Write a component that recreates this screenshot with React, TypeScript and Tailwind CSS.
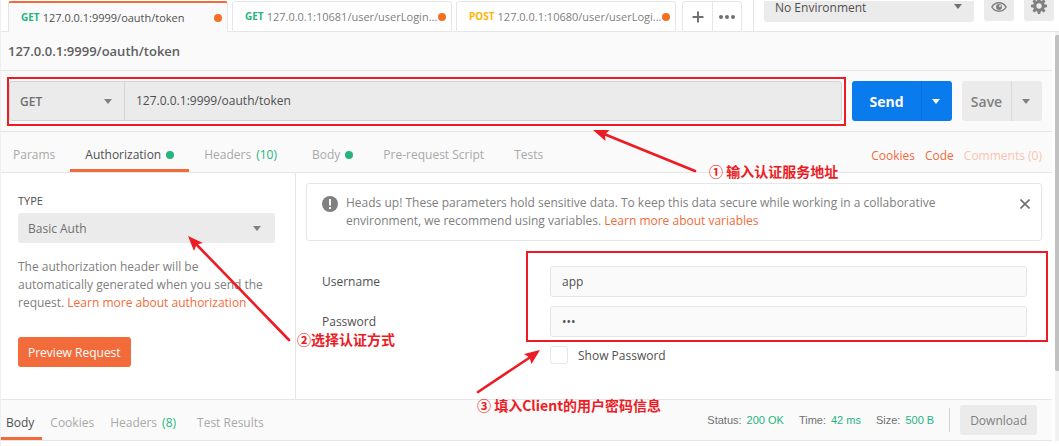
import type { ReactNode } from "react";
import { LuPlus } from "react-icons/lu";

function Caret({ className = "" }: { className?: string }) {
  return (
    <svg viewBox="0 0 8 5" className={`h-[5px] w-2 shrink-0 fill-current ${className}`} aria-hidden="true">
      <path d="M0 0h8L4 5z" />
    </svg>
  );
}

function EyeIcon() {
  return (
    <svg viewBox="0 0 16 10" className="h-[10px] w-4" aria-hidden="true">
      <path d="M8 .8C4.8.8 2.2 2.600.9 5c1.300 2.400 3.900 4.200 7.100 4.200s5.800-1.800 7.100-4.200C13.800 2.600 11.200.8 8 .8z" fill="none" stroke="#808080" strokeWidth="1.500" />
      <circle cx="8" cy="5" r="3" fill="#808080" />
      <circle cx="9" cy="4" r="1" fill="#ebebeb" />
    </svg>
  );
}

function GearIcon() {
  const angles = [0, 45, 90, 135, 180, 225, 270, 315];
  return (
    <svg viewBox="0 0 16 16" className="size-4 shrink-0 fill-[#808080]" aria-hidden="true">
      {angles.map((a) => (
        <path key={a} d="M6.200 3 6.800 0h2.400l.6 3z" transform={`rotate(${a} 8 8)`} />
      ))}
      <circle cx="8" cy="8" r="4.200" fill="none" stroke="#808080" strokeWidth="3" />
    </svg>
  );
}

interface RequestTabProps {
  method: string;
  url: string;
  active?: boolean;
}

function RequestTab({ method, url, active = false }: RequestTabProps) {
  return (
    <button
      type="button"
      role="tab"
      aria-selected={active}
      className={`relative flex h-full w-[220px] items-center gap-[3px] rounded-t-[3px] border-x pr-[5px] pl-3 text-[11px] ${
        active
          ? "border-x-[#e6e6e6] border-t-2 border-t-[#f26b3a] bg-[#fafafa] text-[#505050]"
          : "border-t border-[#e6e6e6] border-b border-b-[#e6e6e6] bg-white text-[#808080]"
      }`}
    >
      <span className={`text-[10px] font-bold ${method === "POST" ? "text-[#ffb400]" : "text-[#26b47f]"}`}>{method}</span>
      <span className="whitespace-nowrap pt-px">{url}</span>
      <span className="absolute right-[5px] size-2 rounded-full bg-[#f47023]" />
    </button>
  );
}

function SectionTab({ children, active = false }: { children: ReactNode; active?: boolean }) {
  return (
    <button
      type="button"
      role="tab"
      aria-selected={active}
      className={`flex h-full items-center gap-[5px] border-b-[3px] pt-2 ${
        active ? "border-[#f26b3a] text-[#505050]" : "border-transparent text-[#a9a9a9]"
      }`}
    >
      {children}
    </button>
  );
}

function Dot() {
  return <span className="size-2 rounded-full bg-[#26b47f]" />;
}

function TopBar() {
  return (
    <header className="flex h-8 justify-between bg-white">
      <div className="flex flex-1 items-stretch pt-px">
        <div className="w-[7px] border-b border-[#e6e6e6]" />
        <div role="tablist" className="flex">
          <RequestTab method="GET" url="127.0.0.1:9999/oauth/token" active />
          <div className="w-1 border-b border-[#e6e6e6]" />
          <RequestTab method="GET" url="127.0.0.1:10681/user/userLogin..." />
          <div className="w-1 border-b border-[#e6e6e6]" />
          <RequestTab method="POST" url="127.0.0.1:10680/user/userLogi..." />
        </div>
        <div className="w-[6px] border-b border-[#e6e6e6]" />
        <div className="flex rounded-t-[3px] border border-[#e6e6e6]">
          <button type="button" aria-label="New tab" className="flex w-[30px] items-center justify-center border-r border-[#e6e6e6] text-[#707070]">
            <LuPlus className="size-4" strokeWidth={3} />
          </button>
          <button type="button" aria-label="Tab options" className="flex w-7 items-center justify-center gap-[2px]">
            <span className="size-1 rounded-full bg-[#707070]" />
            <span className="size-1 rounded-full bg-[#707070]" />
            <span className="size-1 rounded-full bg-[#707070]" />
          </button>
        </div>
        <div className="flex-1 border-b border-[#e6e6e6]" />
      </div>
      <div className="flex items-start gap-[10px] border-b border-l border-[#e6e6e6] pr-[5px] pl-[10px]">
        <div className="relative">
          <select aria-label="Environment" className="h-[21px] w-[210px] appearance-none rounded-b-[3px] bg-[#ebebeb] pb-2 pl-[11px] text-xs leading-[13px] font-medium text-[#505050]">
            <option>No Environment</option>
          </select>
          <Caret className="pointer-events-none absolute top-1 right-3 text-[#707070]" />
        </div>
        <button type="button" aria-label="Environment quick look" className="flex h-[21px] w-[30px] justify-center rounded-b-[3px] bg-[#ebebeb] pt-[2px]">
          <EyeIcon />
        </button>
        <button type="button" aria-label="Settings" className="flex h-[21px] w-[30px] items-end justify-center overflow-hidden rounded-b-[3px] bg-[#ebebeb] pb-[7px]">
          <GearIcon />
        </button>
      </div>
    </header>
  );
}

function UrlBar() {
  return (
    <div className="flex gap-[10px] border-b border-[#e6e6e6] py-[10px] pr-[10px] pl-2">
      <div className="relative flex h-10 flex-1 rounded-[3px] border border-[#d4d4d4] bg-[#ebebeb]">
        <select aria-label="Method" className="w-[115px] appearance-none border-r border-[#d4d4d4] pt-px pl-[10px] text-xs font-semibold text-[#707070]">
          <option>GET</option>
        </select>
        <Caret className="pointer-events-none absolute top-[17px] left-[94px] text-[#808080]" />
        <input aria-label="Request URL" defaultValue="127.0.0.1:9999/oauth/token" className="min-w-0 flex-1 pl-[11px] text-xs text-[#505050] outline-none" />
        <div className="pointer-events-none absolute -top-[5px] -right-[5px] -bottom-[6px] -left-[3px] border-2 border-[#ed1c24]" />
      </div>
      <div className="flex h-10 overflow-hidden rounded-[3px] bg-[#097bed] text-white">
        <button type="button" className="w-[69px] pt-px text-sm font-bold">Send</button>
        <button type="button" aria-label="Send options" className="flex w-[31px] items-center justify-center border-l border-[#066fd9] pr-[2px]">
          <Caret />
        </button>
      </div>
      <div className="flex h-10 overflow-hidden rounded-[3px] bg-[#ebebeb] text-[#808080]">
        <button type="button" className="w-[49px] pt-px text-sm font-semibold">Save</button>
        <button type="button" aria-label="Save options" className="flex w-[31px] items-center justify-center border-l border-[#d9d9d9] pr-[2px]">
          <Caret />
        </button>
      </div>
    </div>
  );
}

function RequestSections() {
  return (
    <div className="flex h-[41px] justify-between border-b border-[#e6e6e6] pr-[10px] pl-3">
      <div role="tablist" className="flex">
        <SectionTab>Params</SectionTab>
        <div className="ml-[15px] flex border-b-[3px] border-[#f26b3a] px-[15px]">
          <button type="button" role="tab" aria-selected="true" className="flex items-center gap-[5px] pt-2 text-[#505050]">
            Authorization <Dot />
          </button>
        </div>
        <div className="ml-[15px] flex">
          <SectionTab>
            Headers <span className="text-[#26b47f]">(10)</span>
          </SectionTab>
          <div className="ml-[35px] flex gap-[30px]">
            <SectionTab>
              Body <Dot />
            </SectionTab>
            <SectionTab>Pre-request Script</SectionTab>
            <SectionTab>Tests</SectionTab>
          </div>
        </div>
      </div>
      <nav className="flex items-center gap-[10px] pt-2 text-[#f26b3a]">
        <a href="#cookies">Cookies</a>
        <a href="#code">Code</a>
        <a href="#comments" className="text-[#f9c4b0]">Comments (0)</a>
      </nav>
    </div>
  );
}

function AuthType() {
  return (
    <aside className="w-[295px] shrink-0 border-r border-[#e6e6e6] pt-5 pr-5 pl-[17px]">
      <label htmlFor="auth-type" className="block text-[11px] leading-4 font-medium text-[#505050]">TYPE</label>
      <div className="relative mt-1">
        <select id="auth-type" className="h-[30px] w-full appearance-none rounded-[3px] bg-[#ebebeb] pt-[2px] pl-[10px] text-xs text-[#707070]">
          <option>Basic Auth</option>
        </select>
        <Caret className="pointer-events-none absolute top-[13px] right-[14px] text-[#808080]" />
      </div>
      <p className="mt-[15px] leading-[18px] text-[#808080]">
        The authorization header will be automatically generated when you send the request.{" "}
        <a href="#authorization" className="text-[#f26b3a]">Learn more about authorization</a>
      </p>
      <button type="button" className="mt-[25px] h-[30px] rounded-[3px] bg-[#f26b3a] px-[10px] pt-[2px] font-medium text-white">
        Preview Request
      </button>
    </aside>
  );
}

function Credentials() {
  return (
    <section className="min-w-0 flex-1 pt-[10px] pr-[10px] pl-[10px]">
      <div className="flex rounded-[3px] border border-[#e6e6e6] pt-[10px] pr-[11px] pb-[10px] pl-[15px]">
        <svg viewBox="0 0 16 16" className="mt-[2px] size-4 shrink-0" aria-hidden="true">
          <circle cx="8" cy="8" r="8" fill="#808080" />
          <path d="M7 3h2v6.500H7zM7 11h2v2H7z" fill="#fff" />
        </svg>
        <p className="ml-2 max-w-[610px] flex-1 leading-[18px] text-[#808080]">
          Heads up! These parameters hold sensitive data. To keep this data secure while working in a collaborative environment, we recommend using variables.{" "}
          <a href="#variables" className="text-[#f26b3a]">Learn more about variables</a>
        </p>
        <button type="button" aria-label="Dismiss" className="mt-[5px] ml-auto self-start">
          <svg viewBox="0 0 10 10" className="size-[10px]" aria-hidden="true">
            <path d="M.5.5l9 9M9.500.5l-9 9" stroke="#707070" strokeWidth="1.600" />
          </svg>
        </button>
      </div>
      <div className="mt-[25px] grid grid-cols-[228px_1fr] items-center gap-y-[9px] pr-[15px] pl-4 text-[#505050]">
        <label htmlFor="username">Username</label>
        <div className="relative row-span-2 grid gap-[9px]">
          <input id="username" defaultValue="app" className="h-[31px] w-full rounded-[3px] border border-[#e6e6e6] bg-[#fafafa] px-[11px] outline-none" />
          <input id="password" type="password" defaultValue="app" className="h-[31px] w-full rounded-[3px] border border-[#e6e6e6] bg-[#fafafa] px-[11px] outline-none" />
          <div className="pointer-events-none absolute -top-[15px] -right-[21px] -bottom-[5px] -left-6 border-2 border-[#ed1c24]" />
        </div>
        <label htmlFor="password">Password</label>
        <div className="col-start-2 flex items-center gap-[10px]">
          <input id="show-password" type="checkbox" className="size-[18px] appearance-none rounded-[3px] border border-[#e6e6e6] bg-white" />
          <label htmlFor="show-password" className="pt-[2px]">Show Password</label>
        </div>
      </div>
    </section>
  );
}

function ResponseBar() {
  return (
    <footer className="flex h-[42px] justify-between border-y border-[#e6e6e6] bg-[#fafafa] pr-[15px]">
      <div role="tablist" className="flex">
        <div className="flex border-b-[3px] border-[#f26b3a] pr-2 pl-[5px]">
          <button type="button" role="tab" aria-selected="true" className="pt-2 text-[#505050]">Body</button>
        </div>
        <div className="ml-2 flex gap-4">
          <SectionTab>Cookies</SectionTab>
          <SectionTab>
            Headers <span className="text-[#26b47f]">(8)</span>
          </SectionTab>
          <div className="ml-[5px]">
            <SectionTab>Test Results</SectionTab>
          </div>
        </div>
      </div>
      <div className="flex items-center">
        <dl className="flex gap-[15px] font-['Liberation_Sans',sans-serif] text-[11px] text-[#707070]">
          <div className="flex gap-[5px]"><dt>Status:</dt><dd className="text-[#26b47f]">200 OK</dd></div>
          <div className="flex gap-[5px]"><dt>Time:</dt><dd className="text-[#26b47f]">42 ms</dd></div>
          <div className="flex gap-[5px]"><dt>Size:</dt><dd className="text-[#26b47f]">500 B</dd></div>
        </dl>
        <div className="ml-[15px] h-6 border-l border-[#d4d4d4]" />
        <button type="button" className="ml-[10px] h-[30px] rounded-[3px] bg-[#ebebeb] px-[10px] pt-[2px] text-[#808080]">Download</button>
      </div>
    </footer>
  );
}

function Notes() {
  return (
    <div className="pointer-events-none absolute inset-0 overflow-hidden font-['Noto_Sans_CJK_SC',sans-serif] text-sm leading-5 font-bold whitespace-nowrap text-[#ed1c24]">
      <svg className="absolute top-0 left-0 h-[446px] w-[1059px]" viewBox="1 0 1059 446" fill="#ed1c24" stroke="#ed1c24" aria-hidden="true">
        <path d="M604 134 695 171M196 244 289 340M478 392 532 356" strokeWidth="2.600" strokeLinecap="round" fill="none" />
        <path d="M593 130 609.500 130 605 134.500 605.500 141zM188 236 203 243 196.500 244.500 194 251zM540 350 524 354 529.500 357.500 531.500 364z" stroke="none" />
      </svg>
      <p className="absolute top-[161px] left-[708px]">① 输入认证服务地址</p>
      <p className="absolute top-[329px] left-[296px]">②选择认证方式</p>
      <p className="absolute top-[395px] left-[476px]">③ 填入Client的用户密码信息</p>
    </div>
  );
}

export default function App() {
  return (
    <div className="relative min-h-screen border-l border-[#efefef] bg-white font-['Open_Sans',sans-serif] text-xs">
      <TopBar />
      <div className="flex">
        <main className="min-w-0 flex-1">
          <div className="bg-[#fafafa]">
            <h1 className="h-[39px] border-b border-[#e6e6e6] pl-[7px] text-[13px] leading-[39px] font-semibold text-[#606060]">127.0.0.1:9999/oauth/token</h1>
            <UrlBar />
            <RequestSections />
          </div>
          <div className="flex min-h-[226px]">
            <AuthType />
            <Credentials />
          </div>
          <ResponseBar />
        </main>
        <div className="ml-[3px] w-1 bg-[#f1f1f1] pt-[3px]">
          <div className="h-[336px] rounded-l-[2px] bg-[#c1c1c1]" />
        </div>
      </div>
      <Notes />
    </div>
  );
}
